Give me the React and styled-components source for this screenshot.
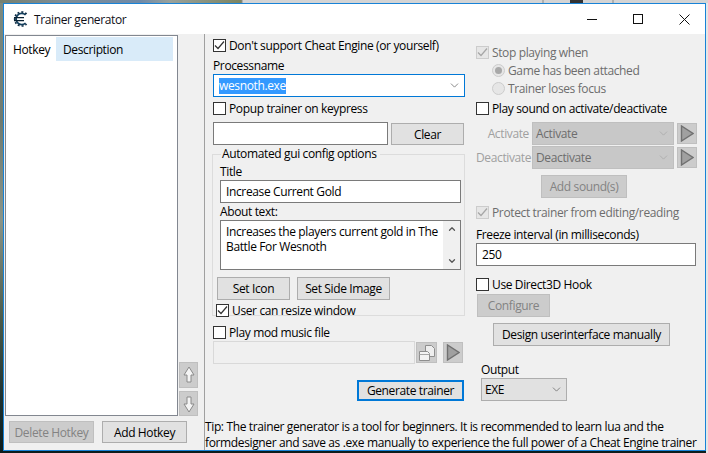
import React from 'react';
import styled, { createGlobalStyle } from 'styled-components';
import { ChevronDown, ChevronUp } from 'lucide-react';

const GlobalStyle = createGlobalStyle`
    html, body {
        margin: 0;
        padding: 0;
        height: 453px;
        overflow: hidden;
        background: #0c1c1c;
    }
    * {
        box-sizing: border-box;
    }
`;

const Desktop = styled.div`
    width: 708px;
    height: 453px;
    background:
        linear-gradient(90deg, transparent 706px, #e6e6e6 706px),
        linear-gradient(180deg, #7d8a80 0, #6f7a70 120px, #8a9488 220px, #4a5a4a 320px, #1c3030 400px, #0c1c1c 453px);
`;

const TopStrip = styled.div`
    height: 3px;
    background: linear-gradient(90deg,
        #76806f 0, #7f8d94 60px, #6f8aa8 140px, #9aa29c 170px, #7c8460 241px,
        #8a8a8a 242px, #d4d4d4 243px, #d4d4d4 542px,
        #8a8a8a 543px, #d4d4d4 544px, #d4d4d4 570px,
        #333 570px, #333 583px, #d4d4d4 583px, #d4d4d4 612px,
        #8a8a8a 613px, #d4d4d4 614px);
`;

const Window = styled.div`
    margin-left: 3px;
    width: 703px;
    height: 448px;
    display: flex;
    flex-direction: column;
    border: 1px solid #1883d7;
    background: #f0f0f0;
    font-family: "Open Sans", "Noto Sans", sans-serif;
    font-size: 12px;
    letter-spacing: -0.37px;
    color: #000;
`;

const TitleBar = styled.div`
    height: 30px;
    flex: none;
    display: flex;
    align-items: center;
    background: #fff;
    padding-left: 9px;
`;

const Logo = styled.svg`
    width: 16px;
    height: 16px;
    flex: none;
`;

const TitleText = styled.span`
    margin-left: 5px;
    color: #101018;
`;

const TitleButtons = styled.div`
    margin-left: auto;
    margin-right: -2px;
    display: flex;
    height: 100%;
`;

const TitleButton = styled.div`
    width: 46px;
    height: 100%;
    display: flex;
    align-items: center;
    justify-content: center;
`;

const Body = styled.div`
    flex: 1;
    min-height: 0;
    display: flex;
`;

const LeftPanel = styled.div`
    width: 201px;
    flex: none;
    border-right: 1px solid #a0a0a0;
    display: flex;
    flex-direction: column;
    padding: 1px 0 0 1px;
`;

const ListArea = styled.div`
    flex: 1;
    min-height: 0;
    display: flex;
`;

const ListBox = styled.div`
    width: 173px;
    background: #fff;
    border: 1px solid #828790;
    padding: 1px 4px 0 0;
    flex: none;
`;

const ListHeader = styled.div`
    display: flex;
    height: 24px;
`;

const HeaderCell = styled.div`
    display: flex;
    align-items: center;
    padding-left: 7px;
    width: ${({ $width }) => $width}px;
    background: ${({ $active }) => ($active ? '#d9ebf9' : 'transparent')};
`;

const MoveButtons = styled.div`
    margin-left: 1px;
    width: 20px;
    display: flex;
    flex-direction: column;
    justify-content: flex-end;
    gap: 3px;
`;

const IconButton = styled.div`
    width: ${({ $w }) => $w || 20}px;
    height: ${({ $h }) => $h || 21}px;
    margin-top: ${({ $top }) => $top || 0}px;
    margin-left: ${({ $left }) => $left || 0}px;
    flex: none;
    display: flex;
    align-items: center;
    justify-content: center;
    background: #cccccc;
    border: 1px solid #bfbfbf;
`;

const HotkeyButtons = styled.div`
    display: flex;
    gap: 8px;
    padding: 5px 0 0 4px;
    height: 34px;
    flex: none;
`;

const Button = styled.div`
    width: ${({ $w }) => $w}px;
    height: ${({ $h }) => $h || 23}px;
    margin-top: ${({ $top }) => $top || 0}px;
    margin-left: ${({ $left }) => $left || 0}px;
    flex: none;
    display: flex;
    align-items: center;
    justify-content: center;
    white-space: nowrap;
    background: ${({ $off }) => ($off ? '#cccccc' : '#e1e1e1')};
    color: ${({ $off }) => ($off ? '#838383' : '#000')};
    border: 1px solid ${({ $off }) => ($off ? '#bfbfbf' : '#adadad')};
`;

const DefaultButton = styled(Button)`
    border: 2px solid #0078d7;
`;

const Main = styled.div`
    flex: 1;
    min-width: 0;
    display: flex;
    flex-direction: column;
`;

const Columns = styled.div`
    flex: 1;
    min-height: 0;
    display: flex;
    padding-left: 8px;
`;

const Column = styled.div`
    width: ${({ $w }) => $w}px;
    margin-left: ${({ $left }) => $left || 0}px;
    flex: none;
    display: flex;
    flex-direction: column;
`;

const TipText = styled.div`
    height: 31px;
    flex: none;
    line-height: 16px;
    white-space: nowrap;
`;

const CheckRow = styled.div`
    display: flex;
    align-items: center;
    height: 14px;
    margin-top: ${({ $top }) => $top || 0}px;
    margin-left: ${({ $left }) => $left || 0}px;
    white-space: nowrap;
    color: ${({ $off }) => ($off ? '#6d6d6d' : '#000')};
`;

const CheckBox = styled.span`
    width: 13px;
    height: 13px;
    flex: none;
    margin-right: 3px;
    display: flex;
    align-items: center;
    justify-content: center;
    background: ${({ $off }) => ($off ? '#e6e6e6' : '#fff')};
    border: 1px solid ${({ $off }) => ($off ? '#cccccc' : '#333')};
`;

const Radio = styled.span`
    width: 13px;
    height: 13px;
    flex: none;
    margin-right: 3px;
    border-radius: 50%;
    display: flex;
    align-items: center;
    justify-content: center;
    background: #e6e6e6;
    border: 1px solid #cccccc;
    &::after {
        content: '';
        width: 7px;
        height: 7px;
        border-radius: 50%;
        background: ${({ $on }) => ($on ? '#a8a8a8' : 'transparent')};
    }
`;

const Label = styled.div`
    height: 16px;
    line-height: 16px;
    margin-top: ${({ $top }) => $top || 0}px;
    margin-left: ${({ $left }) => $left || 0}px;
    white-space: nowrap;
`;

const ComboBox = styled.div`
    height: 23px;
    display: flex;
    align-items: center;
    background: #fff;
    border: 1px solid #0078d7;
    padding: 0 3px 0 5px;
`;

const Selected = styled.span`
    background: #3399ff;
    color: #fff;
    line-height: 16px;
`;

const Chevron = styled(ChevronDown)`
    margin-left: auto;
    color: ${({ $off }) => ($off ? '#a8a8a8' : '#666')};
    flex: none;
`;

const Row = styled.div`
    display: flex;
    align-items: ${({ $align }) => $align || 'center'};
    margin-top: ${({ $top }) => $top || 0}px;
    margin-left: ${({ $left }) => $left || 0}px;
    gap: ${({ $gap }) => $gap || 0}px;
`;

const TextInput = styled.div`
    width: ${({ $w }) => $w}px;
    height: 23px;
    flex: none;
    display: flex;
    align-items: center;
    padding-left: 5px;
    background: ${({ $off }) => ($off ? '#f0f0f0' : '#fff')};
    border: 1px solid ${({ $off }) => ($off ? '#d9d9d9' : '#7a7a7a')};
`;

const GroupBox = styled.fieldset`
    margin: 1px 0 0 -1px;
    width: 253px;
    height: 170px;
    padding: 0 0 0 7px;
    border: 1px solid #dcdcdc;
    display: block;
    min-width: 0;
`;

const GroupLegend = styled.legend`
    margin-left: 1px;
    padding: 0 3px 0 1px;
    line-height: 16px;
    height: 16px;
`;

const AboutBox = styled.div`
    width: 241px;
    height: 50px;
    display: flex;
    background: #fff;
    border: 1px solid #7a7a7a;
`;

const AboutText = styled.div`
    flex: 1;
    padding: 3px 0 0 5px;
    line-height: 15px;
`;

const ScrollTrack = styled.div`
    width: 17px;
    flex: none;
    display: flex;
    flex-direction: column;
    justify-content: space-between;
    align-items: center;
    padding: 3px 0;
    background: #f0f0f0;
    color: #555;
`;

const SelectBox = styled.div`
    width: ${({ $w }) => $w}px;
    height: 23px;
    flex: none;
    display: flex;
    align-items: center;
    padding: 0 3px;
    background: ${({ $off }) => ($off ? '#c8c8c8' : '#e1e1e1')};
    color: ${({ $off }) => ($off ? '#6d6d6d' : '#000')};
    border: 1px solid ${({ $off }) => ($off ? '#bfbfbf' : '#adadad')};
`;

const SideLabel = styled.div`
    width: 53px;
    text-align: right;
    margin-right: 3px;
    flex: none;
    color: #a0a0a0;
`;

const OutputBlock = styled.div`
    display: flex;
    flex-direction: column;
    margin-left: 17px;
`;

const Check = ({ off }) => (
    <svg width="11" height="11" viewBox="0 0 11 11" fill="none">
        <path d="M1 5.5 L4 8.5 L10 1.5" stroke={off ? '#a6a6a6' : '#333'} strokeWidth="1.2" />
    </svg>
);

const Play = () => (
    <svg width="14" height="17" viewBox="0 0 14 17">
        <path d="M1.5 1 L1.5 16 L13 8.5 Z" fill="#a0a0a0" stroke="#707070" strokeWidth="1.4" />
    </svg>
);

const MoveArrow = ({ up }) => (
    <svg width="12" height="18" viewBox="0 0 12 18" style={{ transform: up ? 'none' : 'rotate(180deg)' }}>
        <path d="M6 1 L11 9 L8 9 L8 16 L4 16 L4 9 L1 9 Z" fill="#f4f4f4" stroke="#8a8a8a" strokeWidth="1" />
    </svg>
);

const FilesIcon = () => (
    <svg width="18" height="18" viewBox="0 0 18 18" fill="none">
        <path d="M7.5 1.5 H13.5 L16.5 4.5 V12.5 H7.5 Z" fill="#eeeeee" stroke="#8e8e8e" />
        <path d="M1.5 7.5 H9.5 L11.5 9.5 V16.5 H1.5 Z" fill="#f4f4f4" stroke="#8e8e8e" />
        <path d="M1.5 10.5 H11.5" stroke="#a8a8a8" />
    </svg>
);

const CeLogo = () => (
    <Logo viewBox="0 0 16 16" fill="none">
        <path d="M12.6 4 A5.6 5.6 0 1 0 12.6 12" stroke="#123f5e" strokeWidth="1.7" />
        <path d="M13.6 3 A7 7 0 1 0 13.6 13" stroke="#0d2c44" strokeWidth="1.7" strokeDasharray="1.9 1.9" />
        <path d="M1 6.6 H11 M1 9.6 H11" stroke="#0a2233" strokeWidth="1.3" />
    </Logo>
);

const MinimizeIcon = () => (
    <svg width="10" height="10" viewBox="0 0 10 10"><path d="M0 5.5 H10" stroke="#111" /></svg>
);

const MaximizeIcon = () => (
    <svg width="10" height="10" viewBox="0 0 10 10"><rect x="0.5" y="0.5" width="9" height="9" fill="none" stroke="#111" /></svg>
);

const CloseIcon = () => (
    <svg width="11" height="11" viewBox="0 0 11 11"><path d="M0.5 0.5 L10.5 10.5 M10.5 0.5 L0.5 10.5" stroke="#111" /></svg>
);

const App = () => (
    <Desktop>
        <GlobalStyle />
        <TopStrip />
        <Window>
            <TitleBar>
                <CeLogo />
                <TitleText>Trainer generator</TitleText>
                <TitleButtons>
                    <TitleButton><MinimizeIcon /></TitleButton>
                    <TitleButton><MaximizeIcon /></TitleButton>
                    <TitleButton><CloseIcon /></TitleButton>
                </TitleButtons>
            </TitleBar>
            <Body>
                <LeftPanel>
                    <ListArea>
                        <ListBox>
                            <ListHeader>
                                <HeaderCell $width={50}>Hotkey</HeaderCell>
                                <HeaderCell $width={117} $active>Description</HeaderCell>
                            </ListHeader>
                        </ListBox>
                        <MoveButtons>
                            <IconButton $w={19} $h={26}><MoveArrow up /></IconButton>
                            <IconButton $w={19} $h={25}><MoveArrow /></IconButton>
                        </MoveButtons>
                    </ListArea>
                    <HotkeyButtons>
                        <Button $w={85} $h={22} $off>Delete Hotkey</Button>
                        <Button $w={85} $h={22}>Add Hotkey</Button>
                    </HotkeyButtons>
                </LeftPanel>
                <Main>
                    <Columns>
                        <Column $w={252}>
                            <CheckRow $top={4}><CheckBox><Check /></CheckBox>Don't support Cheat Engine (or yourself)</CheckRow>
                            <Label $top={6}>Processname</Label>
                            <ComboBox><Selected>wesnoth.exe</Selected><Chevron size={13} strokeWidth={1.4} /></ComboBox>
                            <CheckRow $top={4}><CheckBox />Popup trainer on keypress</CheckRow>
                            <Row $top={7} $align="flex-start">
                                <TextInput $w={175} />
                                <Button $w={73} $h={22} $top={1} $left={3}>Clear</Button>
                            </Row>
                            <GroupBox>
                                <GroupLegend>Automated gui config options</GroupLegend>
                                <Label $top={2}>Title</Label>
                                <TextInput $w={241}>Increase Current Gold</TextInput>
                                <Label $top={1}>About text:</Label>
                                <AboutBox>
                                    <AboutText>Increases the players current gold in The Battle For Wesnoth</AboutText>
                                    <ScrollTrack>
                                        <ChevronUp size={10} strokeWidth={3} />
                                        <ChevronDown size={10} strokeWidth={3} />
                                    </ScrollTrack>
                                </AboutBox>
                                <Row $top={7} $left={-3} $gap={7}>
                                    <Button $w={73}>Set Icon</Button>
                                    <Button $w={93}>Set Side Image</Button>
                                </Row>
                                <CheckRow $top={3} $left={-4}><CheckBox><Check /></CheckBox>User can resize window</CheckRow>
                            </GroupBox>
                            <CheckRow $top={9}><CheckBox />Play mod music file</CheckRow>
                            <Row $top={2} $align="flex-start">
                                <TextInput $w={202} $off />
                                <IconButton $w={21} $top={1} $left={1}><FilesIcon /></IconButton>
                                <IconButton $w={20} $top={1} $left={6}><Play /></IconButton>
                            </Row>
                            <Row $top={-2} $align="flex-end">
                                <DefaultButton $w={107} $h={21} $left={144}>Generate trainer</DefaultButton>
                                <OutputBlock>
                                    <Label>Output</Label>
                                    <SelectBox $w={86}>EXE<Chevron size={13} strokeWidth={1.4} /></SelectBox>
                                </OutputBlock>
                            </Row>
                        </Column>
                        <Column $w={221} $left={11}>
                            <CheckRow $top={11} $off><CheckBox $off><Check off /></CheckBox>Stop playing when</CheckRow>
                            <CheckRow $top={4} $left={16} $off><Radio $on />Game has been attached</CheckRow>
                            <CheckRow $top={4} $left={16} $off><Radio />Trainer loses focus</CheckRow>
                            <CheckRow $top={6}><CheckBox />Play sound on activate/deactivate</CheckRow>
                            <Row $top={7}>
                                <SideLabel>Activate</SideLabel>
                                <SelectBox $w={142} $off>Activate<Chevron size={13} strokeWidth={1.4} $off /></SelectBox>
                                <IconButton $left={3}><Play /></IconButton>
                            </Row>
                            <Row $top={1}>
                                <SideLabel>Deactivate</SideLabel>
                                <SelectBox $w={142} $off>Deactivate<Chevron size={13} strokeWidth={1.4} $off /></SelectBox>
                                <IconButton $left={3}><Play /></IconButton>
                            </Row>
                            <Button $w={86} $off $top={6} $left={65}>Add sound(s)</Button>
                            <CheckRow $top={7} $off><CheckBox $off><Check off /></CheckBox>Protect trainer from editing/reading</CheckRow>
                            <Label $top={8}>Freeze interval (in milliseconds)</Label>
                            <TextInput $w={220}>250</TextInput>
                            <CheckRow $top={11}><CheckBox />Use Direct3D Hook</CheckRow>
                            <Button $w={73} $off $top={3} $left={1}>Configure</Button>
                            <Button $w={177} $top={6} $left={17}>Design userinterface manually</Button>
                        </Column>
                    </Columns>
                    <TipText>
                        Tip: The trainer generator is a tool for beginners. It is recommended to learn lua and the<br />
                        formdesigner and save as .exe manually to experience the full power of a Cheat Engine trainer
                    </TipText>
                </Main>
            </Body>
        </Window>
    </Desktop>
);

export default App;
